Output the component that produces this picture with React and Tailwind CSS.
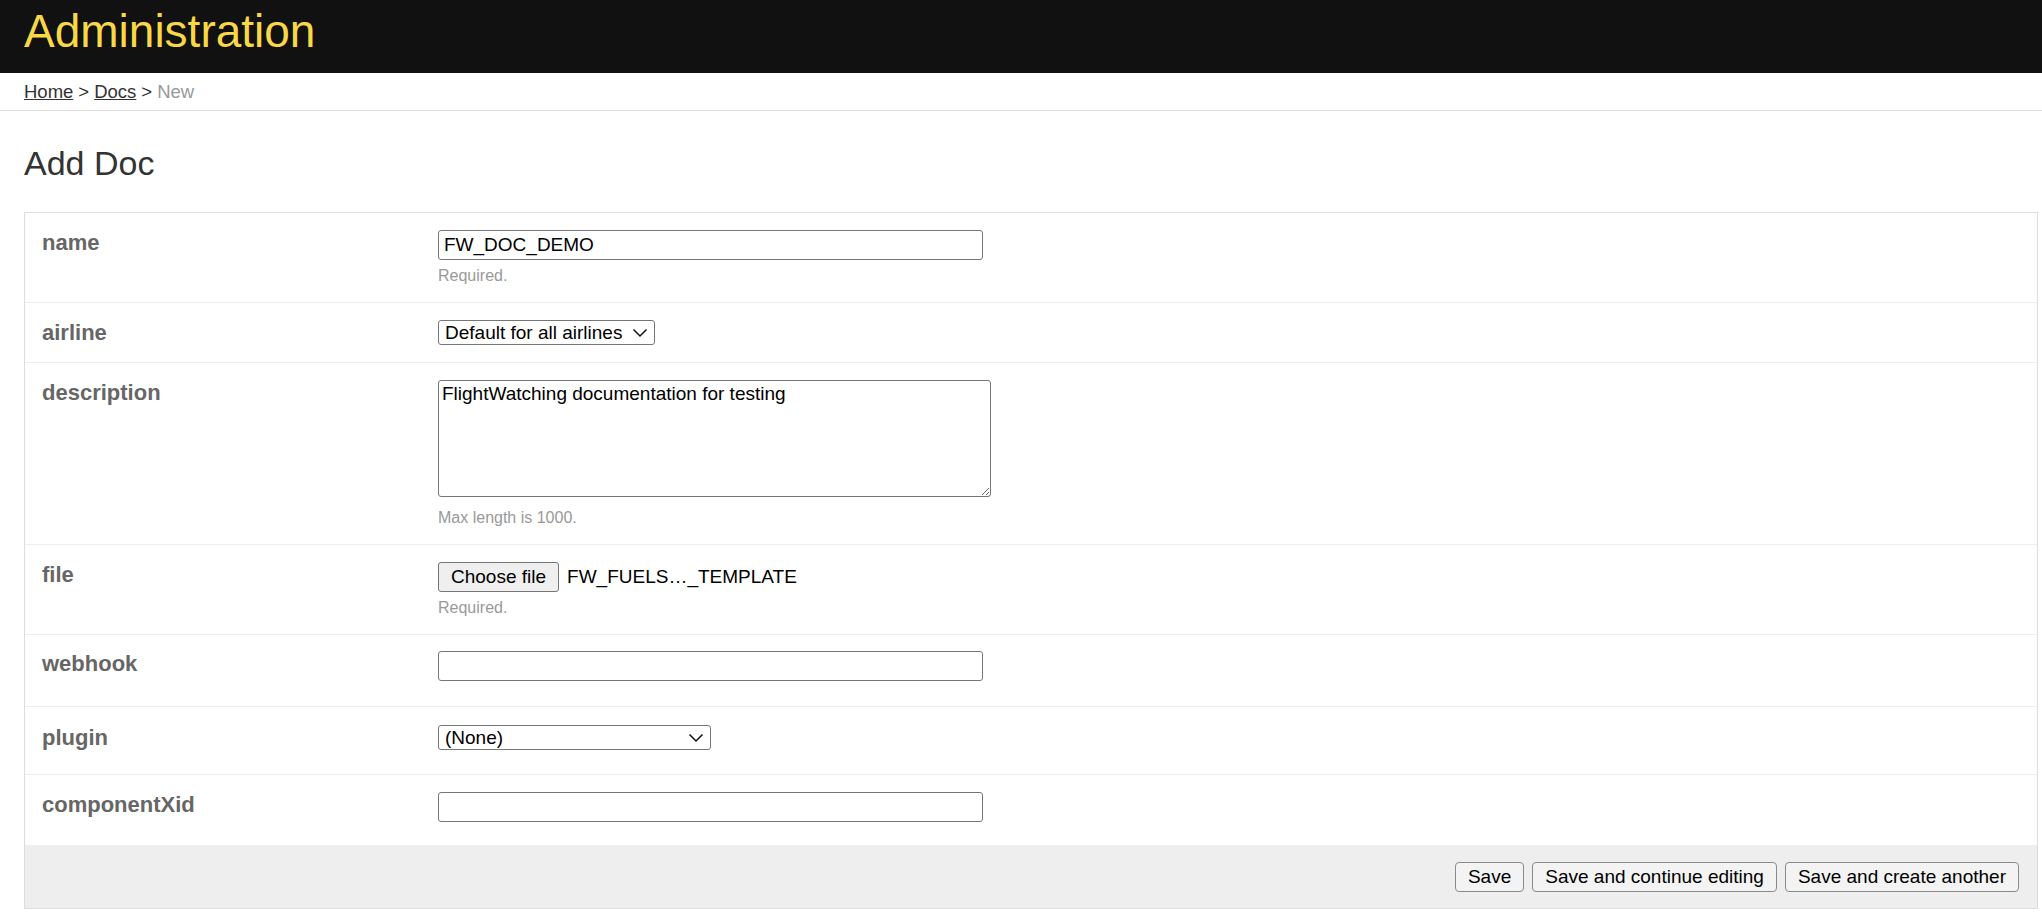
import React from "react";

const Chevron = ({ className }) => (
  <svg viewBox="0 0 16 10" className={className} fill="none" stroke="#111" strokeWidth="1.5">
    <path d="M1.5 1.5 L8 8 L14.5 1.5" />
  </svg>
);

const FakeSelect = ({ value, width = "" }) => (
  <div
    className={`flex items-center justify-between h-[25px] pl-[6px] pr-[6px] border border-[#767676] rounded-[3px] bg-white text-[19px] text-black leading-none whitespace-nowrap ${width}`}
  >
    <span>{value}</span>
    <Chevron className="ml-[10px] w-[16px] h-[10px] shrink-0" />
  </div>
);

const TextBox = ({ value = "" }) => (
  <input
    type="text"
    readOnly
    value={value}
    className="block w-[545px] h-[30px] px-[5px] border border-[#767676] rounded-[3px] bg-white text-[19px] text-black outline-none"
  />
);

const Help = ({ children, className = "mt-[8px]" }) => (
  <p className={`text-[16px] leading-[18px] text-[#999] ${className}`}>{children}</p>
);

const Row = ({ label, children, className = "pt-[17px] pb-[17px]" }) => (
  <div className={`flex px-[17px] border-b border-[#eee] ${className}`}>
    <div className="w-[396px] shrink-0 text-[22px] leading-[25px] font-bold text-[#666]">
      {label}
    </div>
    <div className="flex flex-col items-start">{children}</div>
  </div>
);

export default function App() {
  return (
    <div className="min-h-screen bg-white font-['Liberation_Sans',Arial,sans-serif] text-[#333]">
      {/* Header */}
      <header className="h-[73px] bg-[#111] px-[24px] pt-[8px]">
        <h1 className="text-[46px] leading-[46px] text-[#f8d846]">Administration</h1>
      </header>

      {/* Breadcrumbs */}
      <div className="h-[38px] flex items-center px-[24px] border-b border-[#ddd] text-[18.5px] text-[#333]">
        <a className="underline">Home</a>
        <span className="mx-[5px]">&gt;</span>
        <a className="underline">Docs</a>
        <span className="mx-[5px]">&gt;</span>
        <span className="text-[#999]">New</span>
      </div>

      {/* Content */}
      <div className="pl-[24px] pr-[4px]">
        <h2 className="mt-[32px] mb-[29px] text-[34px] leading-[40px] text-[#333]">Add Doc</h2>

        <div className="border border-[#ddd]">
          <Row label="name">
            <TextBox value="FW_DOC_DEMO" />
            <Help className="mt-[7px]">Required.</Help>
          </Row>

          <Row label="airline" className="pt-[17px] pb-[17px]">
            <FakeSelect value="Default for all airlines" />
          </Row>

          <Row label="description">
            <textarea
              readOnly
              defaultValue="FlightWatching documentation for testing"
              className="block w-[553px] h-[117px] px-[3px] py-[2px] border border-[#767676] rounded-[3px] bg-white text-[19px] leading-[22px] text-black outline-none"
            />
            <Help className="mt-[12px]">Max length is 1000.</Help>
          </Row>

          <Row label="file">
            <div className="flex items-center">
              <button className="h-[30px] px-[12px] border border-[#767676] rounded-[3px] bg-[#efefef] text-[19px] text-black">
                Choose file
              </button>
              <span className="ml-[8px] text-[19px] text-black">FW_FUELS…_TEMPLATE</span>
            </div>
            <Help className="mt-[7px]">Required.</Help>
          </Row>

          <Row label="webhook" className="pt-[16px] pb-[25px]">
            <TextBox />
          </Row>

          <Row label="plugin" className="pt-[18px] pb-[24px]">
            <FakeSelect value="(None)" width="w-[273px]" />
          </Row>

          <Row label="componentXid" className="pt-[17px] pb-[23px] border-b-0">
            <TextBox />
          </Row>

          {/* Submit row */}
          <div className="flex justify-end gap-[8px] bg-[#eee] pt-[17px] pb-[16px] pr-[18px]">
            {["Save", "Save and continue editing", "Save and create another"].map((t) => (
              <button
                key={t}
                className="h-[30px] px-[12px] border border-[#8a8a8a] rounded-[4px] bg-[#f3f3f3] text-[19px] text-black"
              >
                {t}
              </button>
            ))}
          </div>
        </div>
      </div>
    </div>
  );
}
